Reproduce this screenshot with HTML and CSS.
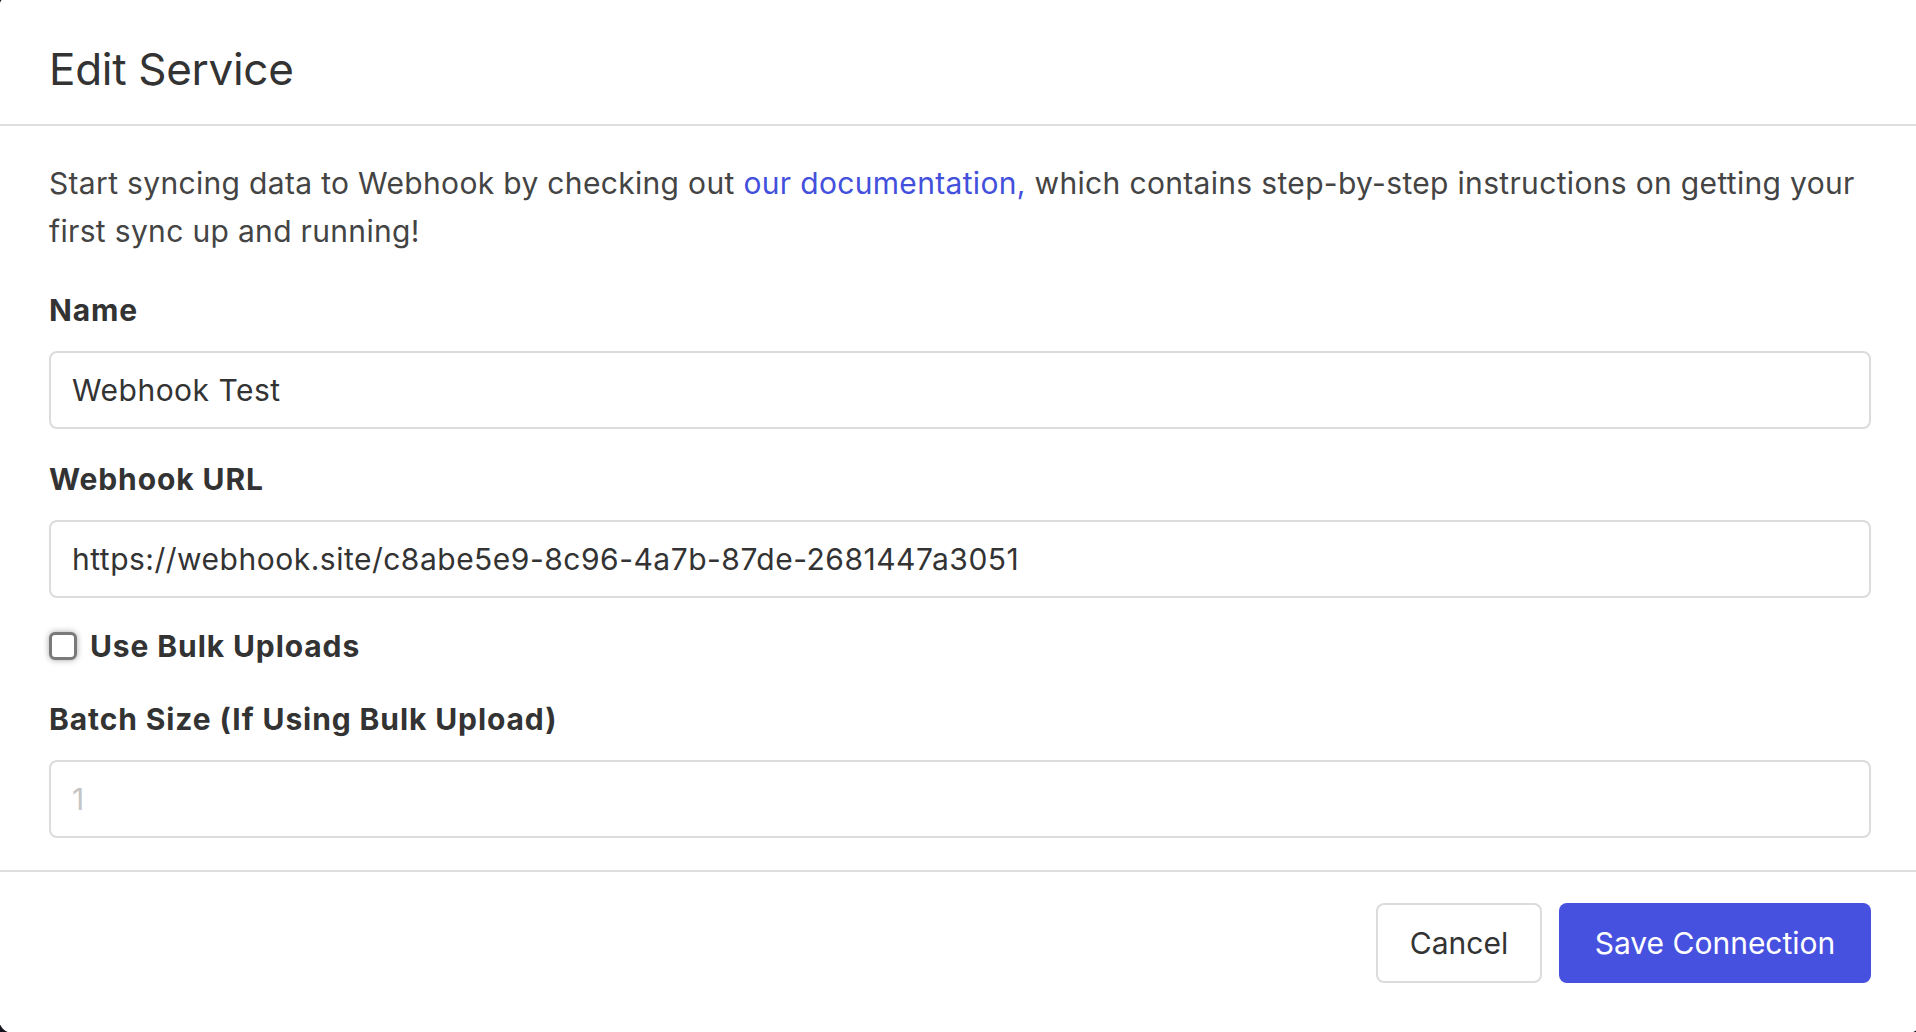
FILE: index.html
```html
<!DOCTYPE html>
<html lang="en">
<head>
<meta charset="utf-8">
<title>Edit Service</title>
<link rel="stylesheet" href="styles.css">
</head>
<body>
<div class="modal">
  <div class="modal-header">
    <h1 class="modal-title">Edit Service</h1>
  </div>
  <div class="modal-body">
    <p class="intro">Start syncing data to Webhook by checking out <a href="#" class="link">our documentation,</a> which contains step-by-step instructions on getting your first sync up and running!</p>
    <div class="field">
      <label class="field-label">Name</label>
      <input class="text-input" type="text" value="Webhook Test">
    </div>
    <div class="field">
      <label class="field-label">Webhook URL</label>
      <input class="text-input" type="text" value="https://webhook.site/c8abe5e9-8c96-4a7b-87de-2681447a3051">
    </div>
    <label class="check-row">
      <span class="check-box"></span>
      <span class="check-label">Use Bulk Uploads</span>
    </label>
    <div class="field last">
      <label class="field-label">Batch Size (If Using Bulk Upload)</label>
      <input class="text-input" type="text" placeholder="1">
    </div>
  </div>
  <div class="modal-footer">
    <button class="btn btn-cancel">Cancel</button>
    <button class="btn btn-primary">Save Connection</button>
  </div>
</div>
</body>
</html>
```
FILE: styles.css
```css
* { box-sizing: border-box; }
html, body { margin: 0; padding: 0; }
body {
  background: #14141f;
  font-family: "Inter", "Roboto", sans-serif;
  color: #333;
  overflow: hidden;
  height: 1032px;
}
.modal {
  background: #fff;
  margin: -6px -6px 0 -1px;
  height: 1039px;
  border-radius: 14px;
  display: flex;
  flex-direction: column;
}
.modal-header {
  padding: 43px 49px 0 50px;
  height: 132px;
  border-bottom: 2px solid #dedede;
}
.modal-title {
  margin: 0;
  font-size: 44px;
  font-weight: 400;
  letter-spacing: -0.3px;
  line-height: 64px;
  color: #333;
}
.modal-body {
  padding: 33px 51px 32px 50px;
  border-bottom: 2px solid #dedede;
}
.intro {
  margin: 0 0 31px;
  font-size: 30px;
  letter-spacing: 0.33px;
  line-height: 48px;
  color: #444;
}
.link { color: #4350dc; text-decoration: none; }
.field { margin-bottom: 26px; }
.field.last { margin-bottom: 0; }
.field-label {
  display: block;
  font-size: 30px;
  font-weight: 700;
  letter-spacing: 0.9px;
  line-height: 48px;
  margin-bottom: 17px;
  color: #333;
}
.text-input {
  display: block;
  width: 100%;
  height: 78px;
  border: 2px solid #dcdcdc;
  border-radius: 8px;
  padding: 0 21px;
  font-family: inherit;
  font-size: 30px;
  letter-spacing: 0.5px;
  color: #333;
  background: #fff;
  outline: none;
}
.text-input::placeholder { color: #c4c4c4; }
.check-row {
  display: flex;
  align-items: center;
  gap: 13px;
  margin: -2px 0 25px;
  height: 48px;
}
.check-box {
  width: 28px;
  height: 28px;
  border: 3px solid #7a7a7a;
  border-radius: 6px;
  box-shadow: 0 0 6px rgba(0,0,0,0.35);
  background: #fff;
}
.check-label {
  font-size: 30px;
  font-weight: 700;
  letter-spacing: 0.9px;
  color: #333;
}
.modal-footer {
  display: flex;
  justify-content: flex-end;
  gap: 17px;
  padding: 31px 51px 0 50px;
}
.btn {
  height: 80px;
  border-radius: 8px;
  font-family: inherit;
  font-size: 30px;
  cursor: pointer;
}
.btn-cancel {
  width: 166px;
  background: #fff;
  border: 2px solid #dcdcdc;
  color: #333;
}
.btn-primary {
  width: 312px;
  background: #4751e0;
  border: none;
  color: #fff;
}
```
